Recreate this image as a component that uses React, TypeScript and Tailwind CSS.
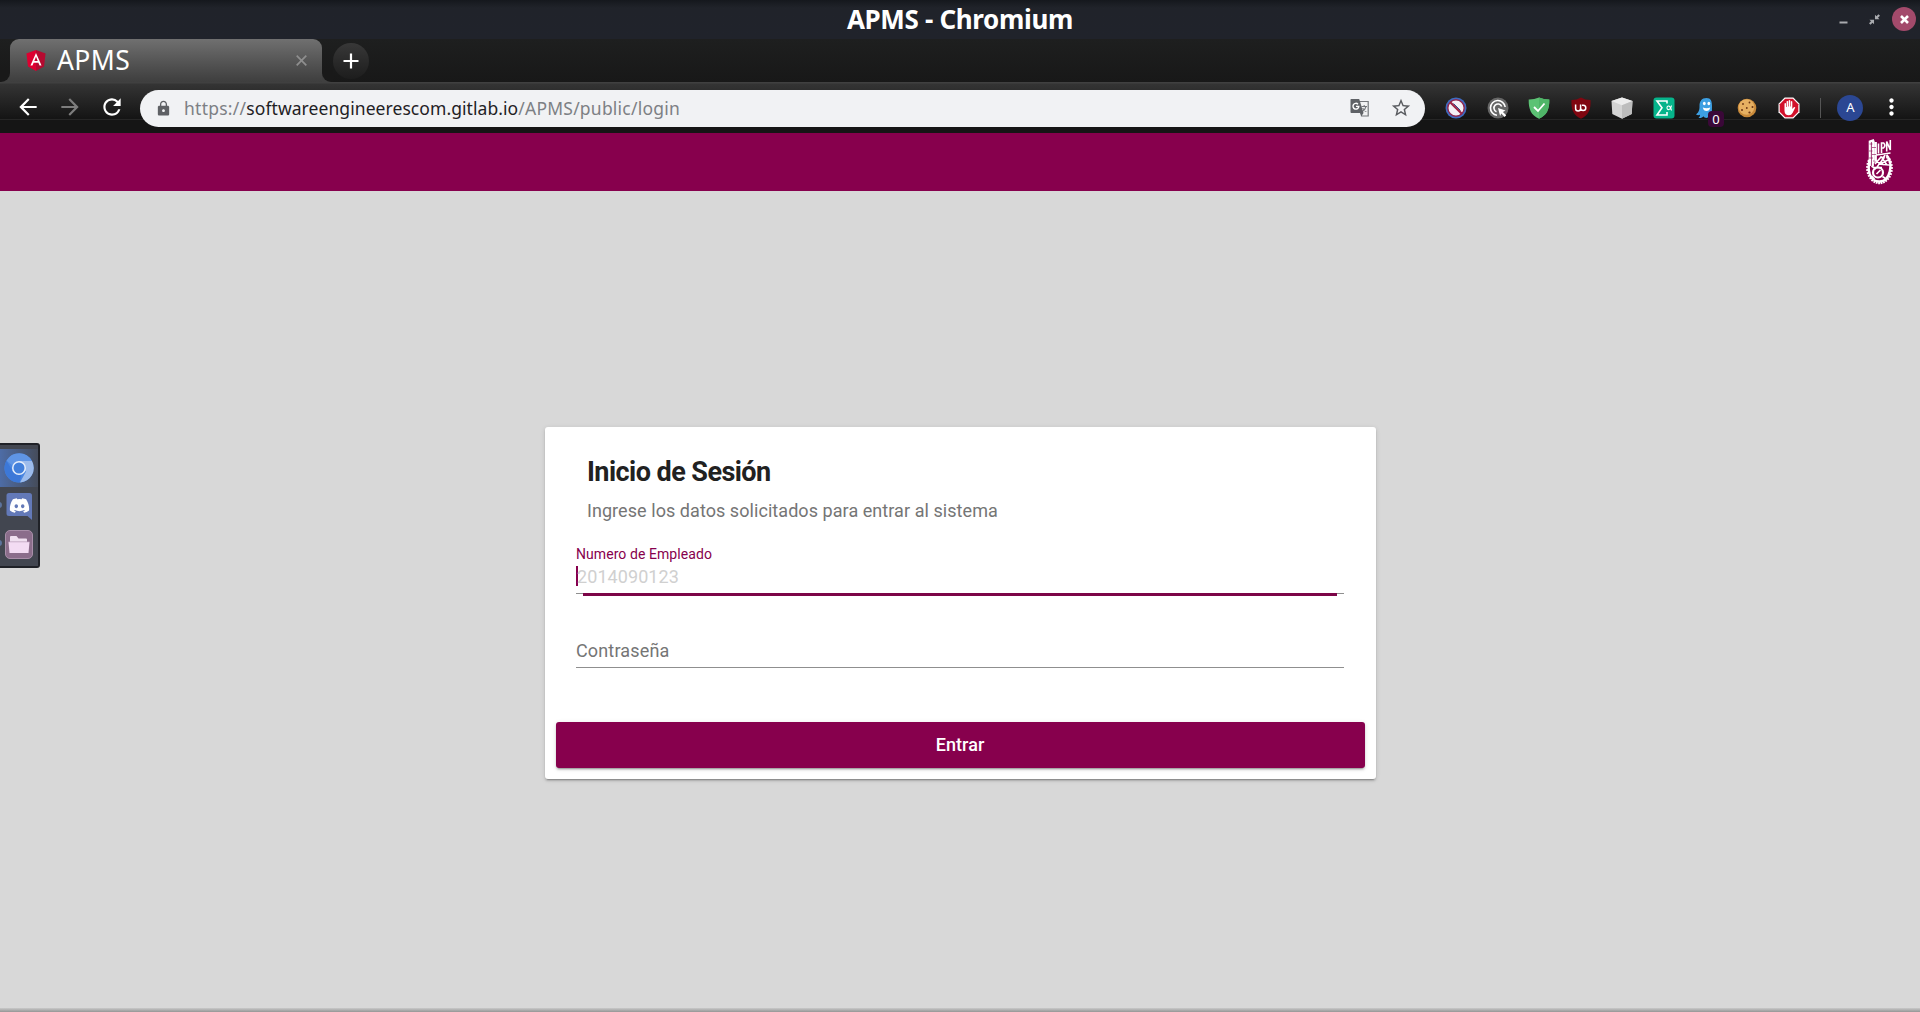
import React from "react";
import { MdArrowBack, MdArrowForward, MdRefresh, MdLock, MdStarBorder, MdMoreVert } from "react-icons/md";
import { FaDiscord } from "react-icons/fa";

function TitleBar() {
  return (
    <div className="relative flex h-[39px] items-center justify-center bg-linear-to-b from-[#15181d] via-[#20232a] via-20% to-[#20232b]">
      <h1 className="pb-px font-['Noto_Sans'] text-[26px] leading-[38px] font-bold tracking-[-0.330px] text-white">APMS - Chromium</h1>
      <div className="absolute right-1 top-0 flex h-[38px] items-center">
        <svg className="mr-[14px] h-6 w-6" viewBox="0 0 24 24">
          <path d="M8.500 15.500h8" stroke="#a9abaf" strokeWidth="2" />
        </svg>
        <svg className="mr-[12px] h-[11px] w-[11px]" viewBox="0 0 12 12" fill="#a9abaf">
          <path d="M6.5 0.8v5h5L9.8 4.2 12 2 10.3.4 8.200 2.500zM5.500 11.200v-5h-5L2.200 7.800 0 10l1.700 1.600 2.100-2.100z" />
        </svg>
        <span className="flex h-6 w-6 items-center justify-center rounded-full bg-[#a34a6b]">
          <svg className="h-[9px] w-[9px]" viewBox="0 0 9 9">
            <path d="M1 1l7 7M8 1l-7 7" stroke="#fff" strokeWidth="2.600" />
          </svg>
        </span>
      </div>
    </div>
  );
}

function AngularLogo() {
  return (
    <svg className="h-[21px] w-[20px]" viewBox="0 0 20 22">
      <path d="M10 0L0 3.600l1.600 13.600L10 22z" fill="#dd0031" />
      <path d="M10 0l10 3.600-1.600 13.600L10 22z" fill="#b50a30" />
      <path d="M10 3.200L4.200 16.200h2.100l1.200-2.900h5l1.200 2.900h2.100zm0 3.800l1.800 4.400H8.200z" fill="#fff" />
    </svg>
  );
}

function TabStrip() {
  return (
    <div className="flex h-[43px] items-end bg-linear-to-b from-[#1e1f1f] to-[#181818]">
      <div className="h-3 w-[10px] bg-[#404040]">
        <div className="h-full w-full rounded-br-[9px] bg-[#191919]" />
      </div>
      <div className="flex h-[43px] w-[312px] items-center rounded-t-[9px] bg-linear-to-b from-[#707070] to-[#3e3e3e] pl-4 pr-[15px]">
        <AngularLogo />
        <span className="ml-[11px] flex-1 pb-px font-['Noto_Sans'] text-[26.500px] leading-[39px] tracking-[0.400px] text-white">APMS</span>
        <svg className="h-[11px] w-[11px]" viewBox="0 0 11 11">
          <path d="M0.700 0.700l9.600 9.600M10.300 0.700l-9.600 9.600" stroke="#8f8f8f" strokeWidth="1.700" />
        </svg>
      </div>
      <div className="h-3 w-[11px] bg-[#404040]">
        <div className="h-full w-full rounded-bl-[9px] bg-[#191919]" />
      </div>
      <div className="mb-[3px] flex h-9 w-9 items-center justify-center rounded-full bg-linear-to-b from-[#383838] to-[#1d1d1d]">
        <svg className="h-4 w-4" viewBox="0 0 16 16">
          <path d="M8 0.500v15M0.500 8h15" stroke="#fff" strokeWidth="2.200" />
        </svg>
      </div>
    </div>
  );
}

function TranslateIcon() {
  return (
    <svg className="h-5 w-5" viewBox="0 0 20 20">
      <path d="M9 3.500h9.200v14.500H11.500z" fill="#f1f2f3" stroke="#74777b" strokeWidth="1.200" />
      <path d="M11.500 8.500h5.500M14.200 7v1.500M16 8.500c-.6 2.500-2 4-3.700 5M12.600 10c.8 1.600 2 2.800 3.700 3.600" stroke="#74777b" strokeWidth="1.100" fill="none" />
      <path d="M1.200 1h8l4.300 14H1.200Q.5 15 .5 14V1.800Q.5 1 1.200 1z" fill="#5f6266" />
      <path d="M10 15h3.500L11.500 18z" fill="#5f6266" />
      <path d="M8 6.200a2.900 2.900 0 1 0 .8 2.200H6" stroke="#fff" strokeWidth="1.400" fill="none" />
    </svg>
  );
}

function Slot({ children }: { children: React.ReactNode }) {
  return <div className="relative flex h-[37px] w-[41.600px] shrink-0 items-center justify-center">{children}</div>;
}

function Extensions() {
  return (
    <div className="ml-[10.500px] flex">
      <Slot>
        <svg className="h-[22px] w-[22px]" viewBox="0 0 22 22">
          <circle cx="11" cy="11" r="10.500" fill="#3e6bc0" />
          <circle cx="11" cy="11" r="8.200" fill="#f4f0f6" stroke="#8f2750" strokeWidth="1.400" />
          <path d="M5.200 5.200l11.600 11.600" stroke="#9c2445" strokeWidth="2.200" />
          <path d="M8.500 6.500l7 7" stroke="#3a4a8c" strokeWidth="1" />
        </svg>
      </Slot>
      <Slot>
        <svg className="h-[22px] w-[22px]" viewBox="0 0 22 22" fill="none">
          <circle cx="11" cy="11" r="10.500" fill="#666" />
          <path d="M10 18.300A7.400 7.400 0 1 1 18.200 10M9.500 14.700a4 4 0 1 1 5.200-5.200" stroke="#fff" strokeWidth="1.600" />
          <path d="M11 11l7.500 2.600-2.600 1.400 3.300 3.300-1.600 1.600-3.300-3.300-1.200 2.400z" fill="#fff" />
        </svg>
      </Slot>
      <Slot>
        <svg className="h-[22px] w-[22px]" viewBox="0 0 22 22" fill="none">
          <path d="M11 0.500Q16 2.700 21.300 2.600C21.500 12 19 18.500 11 21.700 3 18.500.5 12 .7 2.600Q6 2.700 11 .5z" fill="#5cc274" />
          <path d="M11 .5Q16 2.700 21.300 2.600C21.500 12 19 18.500 11 21.700z" fill="#4fb568" />
          <path d="M6 10l4 4 6.500-7.500" stroke="#fff" strokeWidth="1.800" />
        </svg>
      </Slot>
      <Slot>
        <svg className="h-[22px] w-[22px]" viewBox="0 0 22 22" fill="none">
          <path d="M11 0.500Q15 3 20.500 3C21 12 19 18 11 21.700 3 18 1 12 1.500 3Q7 3 11 .5z" fill="#800610" />
          <path d="M5.600 7.500v4a2.500 2.500 0 0 0 5 0v-4M10.600 11a2.600 2.600 0 1 0 2.700-2.700h-1.300" stroke="#fff" strokeWidth="1.500" />
        </svg>
      </Slot>
      <Slot>
        <svg className="mr-px h-[22px] w-[22px]" viewBox="0 0 22 22">
          <path d="M11 0.500l10.500 3.500-.8 13L11 21.700 1.300 17 .5 4z" fill="#d4d4d4" />
          <path d="M.5 4L11 .5l10.500 3.500L11 8.200z" fill="#ececec" />
          <path d="M11 8.200L21.500 4l-.8 13L11 21.700z" fill="#bdbdbd" />
        </svg>
      </Slot>
      <Slot>
        <svg className="h-[22px] w-[22px]" viewBox="0 0 22 22" fill="none">
          <rect x="0.500" y="0.500" width="21" height="21" rx="3" fill="#06b48b" />
          <path d="M14 6.500V4H4l5 6.800L4 18h10v-3" stroke="#fff" strokeWidth="1.600" />
          <path d="M18.500 8.500c-1 5-4.500 5-4.500 2.300s3.200-3 4.500 2.700" stroke="#fff" strokeWidth="1.100" />
        </svg>
      </Slot>
      <Slot>
        <svg className="h-[22px] w-[22px]" viewBox="0 0 22 22">
          <path d="M11.500 1C6.500 1 4.500 4.500 4.500 9c0 4-.5 6-3.500 8.500 1.500 1 3 .8 4 .3 0 1.500-.5 2.500-1.500 3.200 2.500.3 4-.5 5-1.700.5 1 1.500 1.700 3 1.700 1 0 1.700-1 2-2 1 .5 3 .5 4-.5-1-2-.5-5-.5-9.500S16 1 11.500 1z" fill="#3d9fe2" />
          <ellipse cx="9.300" cy="6.500" rx="1.400" ry="1.800" fill="#fff" />
          <ellipse cx="13.800" cy="6.500" rx="1.400" ry="1.800" fill="#fff" />
          <path d="M7.800 10.500q3.700 1.500 7.400 0-.7 3.500-3.700 3.500t-3.700-3.500z" fill="#fff" />
        </svg>
        <span className="absolute left-[23px] top-[22px] flex h-4 w-4 items-center justify-center rounded-sm bg-[#3a0838] font-['Noto_Sans'] text-[13px] leading-4 text-white">0</span>
      </Slot>
      <Slot>
        <svg className="h-[20px] w-[20px]" viewBox="0 0 20 20">
          <circle cx="10" cy="10" r="9.300" fill="#c98a3a" />
          <circle cx="9.500" cy="9" r="7.800" fill="#e6b062" />
          <g fill="#6b3514">
            <circle cx="6" cy="6" r="0.900" /><circle cx="12.500" cy="4.500" r="0.900" /><circle cx="15.500" cy="9" r="1" />
            <circle cx="9.800" cy="10" r="0.900" /><circle cx="5" cy="12" r="1" /><circle cx="12.500" cy="14.500" r="1.100" />
          </g>
        </svg>
      </Slot>
      <Slot>
        <svg className="h-[22px] w-[22px]" viewBox="0 0 22 22">
          <path d="M6.700.5h8.600l6.200 6.200v8.600l-6.200 6.200H6.700L.5 15.300V6.700z" fill="#fff" />
          <path d="M7.200 1.700h7.600l5.500 5.500v7.600l-5.500 5.500H7.200l-5.500-5.500V7.200z" fill="#d2112b" />
          <path d="M6.500 6.500q.8-.8 1.500 0V10h.6V4.300q.8-.8 1.500 0V9.500h.6V3.500q.8-.8 1.500 0v6h.6V4.500q.8-.8 1.500 0V12l1.500-1.700q1-.6 1.500.2L14.500 16q-1 2.300-3.700 2.300-4 0-4.300-4.300z" fill="#fff" />
        </svg>
      </Slot>
    </div>
  );
}

function Toolbar() {
  return (
    <div className="flex h-[51px] items-center bg-[linear-gradient(to_bottom,#404040_0,#404040_1px,#343434_2px,#151515_36px,#151515_37px,#262626_37px,#262626_38px,#151515_38px)] pl-[15px]">
      <div className="flex h-[51px] items-center pb-[2px] text-white">
        <MdArrowBack size={26} />
        <MdArrowForward size={26} className="ml-4 text-[#7d7d7d]" />
        <MdRefresh size={26} className="ml-[15.500px]" />
      </div>
      <div className="ml-[15.500px] mt-px flex h-[37px] w-[1285px] shrink-0 items-center rounded-full bg-[#f1f2f4] pl-[15px] pr-[13px]">
        <MdLock size={17} className="text-[#5f6165]" />
        <div className="ml-[12px] flex-1 whitespace-pre font-['Noto_Sans'] text-[17.500px] leading-6 tracking-[0.070px] text-[#7d8084]">
          <span className="tracking-[0.250px]">https://</span>
          <span className="text-[#1f2124]">softwareengineerescom.gitlab.io</span>
          <span className="tracking-[0.220px]">/APMS/public/login</span>
        </div>
        <TranslateIcon />
        <MdStarBorder size={22} className="ml-[20px] text-[#5a5c60]" />
      </div>
      <Extensions />
      <div className="ml-[10.500px] h-5 w-px bg-[#555]" />
      <div className="ml-[16px] flex h-[26px] w-[26px] items-center justify-center rounded-full bg-[#2b4793] font-['Noto_Sans'] text-[13px] text-white">A</div>
      <MdMoreVert size={27} className="ml-[15px] pb-px text-white" />
    </div>
  );
}

function IpnLogo() {
  const teeth = Array.from({ length: 23 }, (_, i) => i);
  return (
    <svg className="h-[46px] w-[28px]" viewBox="0 0 28 46" fill="none" stroke="#fff">
      <path d="M3.800 27V2.500l3-1V27M7.500 24V1.500M9.800 3v20" strokeWidth="2.200" />
      <path d="M3.500 5h3M6 8.500h4M3 12h3.500M6 15.500h4M3 19h4M7 22h3" stroke="#87004d" strokeWidth=".6" />
      <path d="M12.500 4.500v10M15.500 14V4h2.200q2.300 2.500-.2 5h-2M20.700 12.500V2.500l3.600 8.500V1" strokeWidth="1.600" />
      <path d="M10.500 16l14-2" strokeWidth="1.300" />
      <path d="M9 25l6-7 3 1-7 9M19 16l-5 9 8-4M12 25l11 1M9 21l9 5M16 19l5 7" strokeWidth="1.600" />
      <path d="M20.500 16C28 25 24 42.500 13.500 42.500S1 30 4 20" strokeWidth="2.400" />
      {teeth.map((i) => {
        const a = ((i * 11.500 - 46) * Math.PI) / 180;
        return (
          <path
            key={i}
            d={`M${13.500 + 10 * Math.cos(a)} ${29 + 13.500 * Math.sin(a)}L${13.500 + 13.400 * Math.cos(a)} ${29 + 16.200 * Math.sin(a)}`}
            strokeWidth="1.800"
          />
        );
      })}
      <circle cx="12" cy="33.500" r="5" strokeWidth="2.200" />
      <path d="M10.500 35l4-4M5.500 27l4.500 3M16.500 37.500l3 2M5.500 37l3 3M7 28.500h9" strokeWidth="1.700" />
    </svg>
  );
}

function Dock() {
  return (
    <div className="absolute left-0 top-[443px] flex h-[125px] w-10 flex-col rounded-r-[3px] border-y-2 border-r-2 border-[#1f2127] bg-[#424650] pt-[4px]">
      <div className="flex h-[38px] items-center bg-linear-to-r from-[#4d6ca6] to-[#454c5b] pl-[4px]">
        <svg className="h-[30px] w-[30px]" viewBox="0 0 30 30">
          <circle cx="15" cy="15" r="14.500" fill="#4a86e0" />
          <path d="M15 8h13a14.500 14.500 0 0 1-12 21.500l6-11z" fill="#9dbcec" />
          <path d="M2.500 7.800A14.500 14.500 0 0 1 28 8H15a7 7 0 0 0-6.500 4.500z" fill="#5f95e5" />
          <path d="M2.500 7.800L9 18.500a7 7 0 0 0 8.500 3L15.500 29.500A14.500 14.500 0 0 1 2.500 7.800z" fill="#3c78d8" />
          <circle cx="15" cy="15" r="7" fill="#e6eefb" />
          <circle cx="15" cy="15" r="5.500" fill="#4280dc" />
        </svg>
      </div>
      <div className="relative flex h-[38px] items-center pl-[6px]">
        <svg className="h-[28px] w-[27px]" viewBox="0 0 27 28">
          <path d="M3 1h20.500q2.500 0 2.500 2.500V28l-4.500-4H3Q.5 24 .5 21.500v-18Q.5 1 3 1z" fill="#6379b8" />
        </svg>
        <FaDiscord size={21} className="absolute left-[9px] top-[8px] text-white" />
        <span className="absolute -left-px top-[15px] h-[6px] w-[3px] rounded-r-full bg-[#5d739c]" />
      </div>
      <div className="relative flex h-[38px] items-center pl-[5px]">
        <span className="absolute -left-px top-[15px] h-[6px] w-[3px] rounded-r-full bg-[#5d739c]" />
        <svg className="h-[29px] w-[28px]" viewBox="0 0 28 29">
          <rect x="0.500" y="0.500" width="27" height="28" rx="4.500" fill="#8b6d8b" stroke="#a98fa9" />
          <path d="M5 12V7q0-1 1-1h5.500l2 2.500H21q1 0 1 1V12z" fill="#f0e0f0" />
          <path d="M3.500 12h21L23.500 23H4.500z" fill="#f3dcf3" />
          <path d="M3.500 11.800h21" stroke="#b89ab8" strokeWidth=".7" />
        </svg>
      </div>
    </div>
  );
}

function LoginCard() {
  return (
    <form className="mt-[236px] flex h-[352px] w-[831px] flex-col rounded-[3px] bg-white px-[11px] shadow-[0_3px_1px_-2px_rgba(0,0,0,0.2),0_2px_2px_0_rgba(0,0,0,0.14),0_1px_5px_0_rgba(0,0,0,0.12)]">
      <h2 className="ml-[31.500px] mt-[27px] text-[27px] leading-9 font-bold tracking-[-0.550px] text-[#212121]">Inicio de Sesión</h2>
      <p className="ml-[31.500px] mt-[9px] text-[18px] leading-6 tracking-[0.060px] text-[#757575]">Ingrese los datos solicitados para entrar al sistema</p>
      <div className="mx-[20.500px] mt-[22px] flex h-[72px] flex-col">
        <label className="pt-px text-[14px] leading-4 tracking-[0.070px] text-[#87004d]">Numero de Empleado</label>
        <div className="relative flex h-[32px] items-center border-b border-[#8f8f8f] pb-[3px]">
          <span className="h-5 w-[2px] shrink-0 bg-[#87004d]" />
          <span className="-ml-[1px] pt-px text-[18px] leading-5 tracking-[0.080px] text-[#d0d0d0]">2014090123</span>
          <div className="absolute left-[7px] right-[7px] top-[31px] h-[3px] bg-[#7c0547]" />
        </div>
      </div>
      <div className="mx-[20.500px] mt-[20px] flex h-[31px] items-start border-b border-[#8f8f8f]">
        <label className="pt-px text-[18px] leading-[26px] tracking-[0.150px] text-[#757575]">Contraseña</label>
      </div>
      <button
        type="button"
        className="mb-[11px] mt-auto h-[46px] w-full rounded-[3px] bg-[#87004d] pb-px text-[18px] font-medium tracking-[0.060px] text-white shadow-[0_3px_1px_-2px_rgba(0,0,0,0.2),0_2px_2px_0_rgba(0,0,0,0.14),0_1px_5px_0_rgba(0,0,0,0.12)]"
      >
        Entrar
      </button>
    </form>
  );
}

export default function App() {
  return (
    <div className="relative flex h-[1012px] w-[1920px] flex-col overflow-hidden bg-[#d8d8d8] font-[Roboto,sans-serif]">
      <TitleBar />
      <TabStrip />
      <Toolbar />
      <header className="flex h-[58px] items-center justify-end bg-[#87004d] pr-[26px]">
        <IpnLogo />
      </header>
      <main className="flex flex-1 items-start justify-center">
        <LoginCard />
      </main>
      <div className="h-[4px] bg-linear-to-b from-[#c9c9c9] to-[#969696]" />
      <Dock />
    </div>
  );
}
